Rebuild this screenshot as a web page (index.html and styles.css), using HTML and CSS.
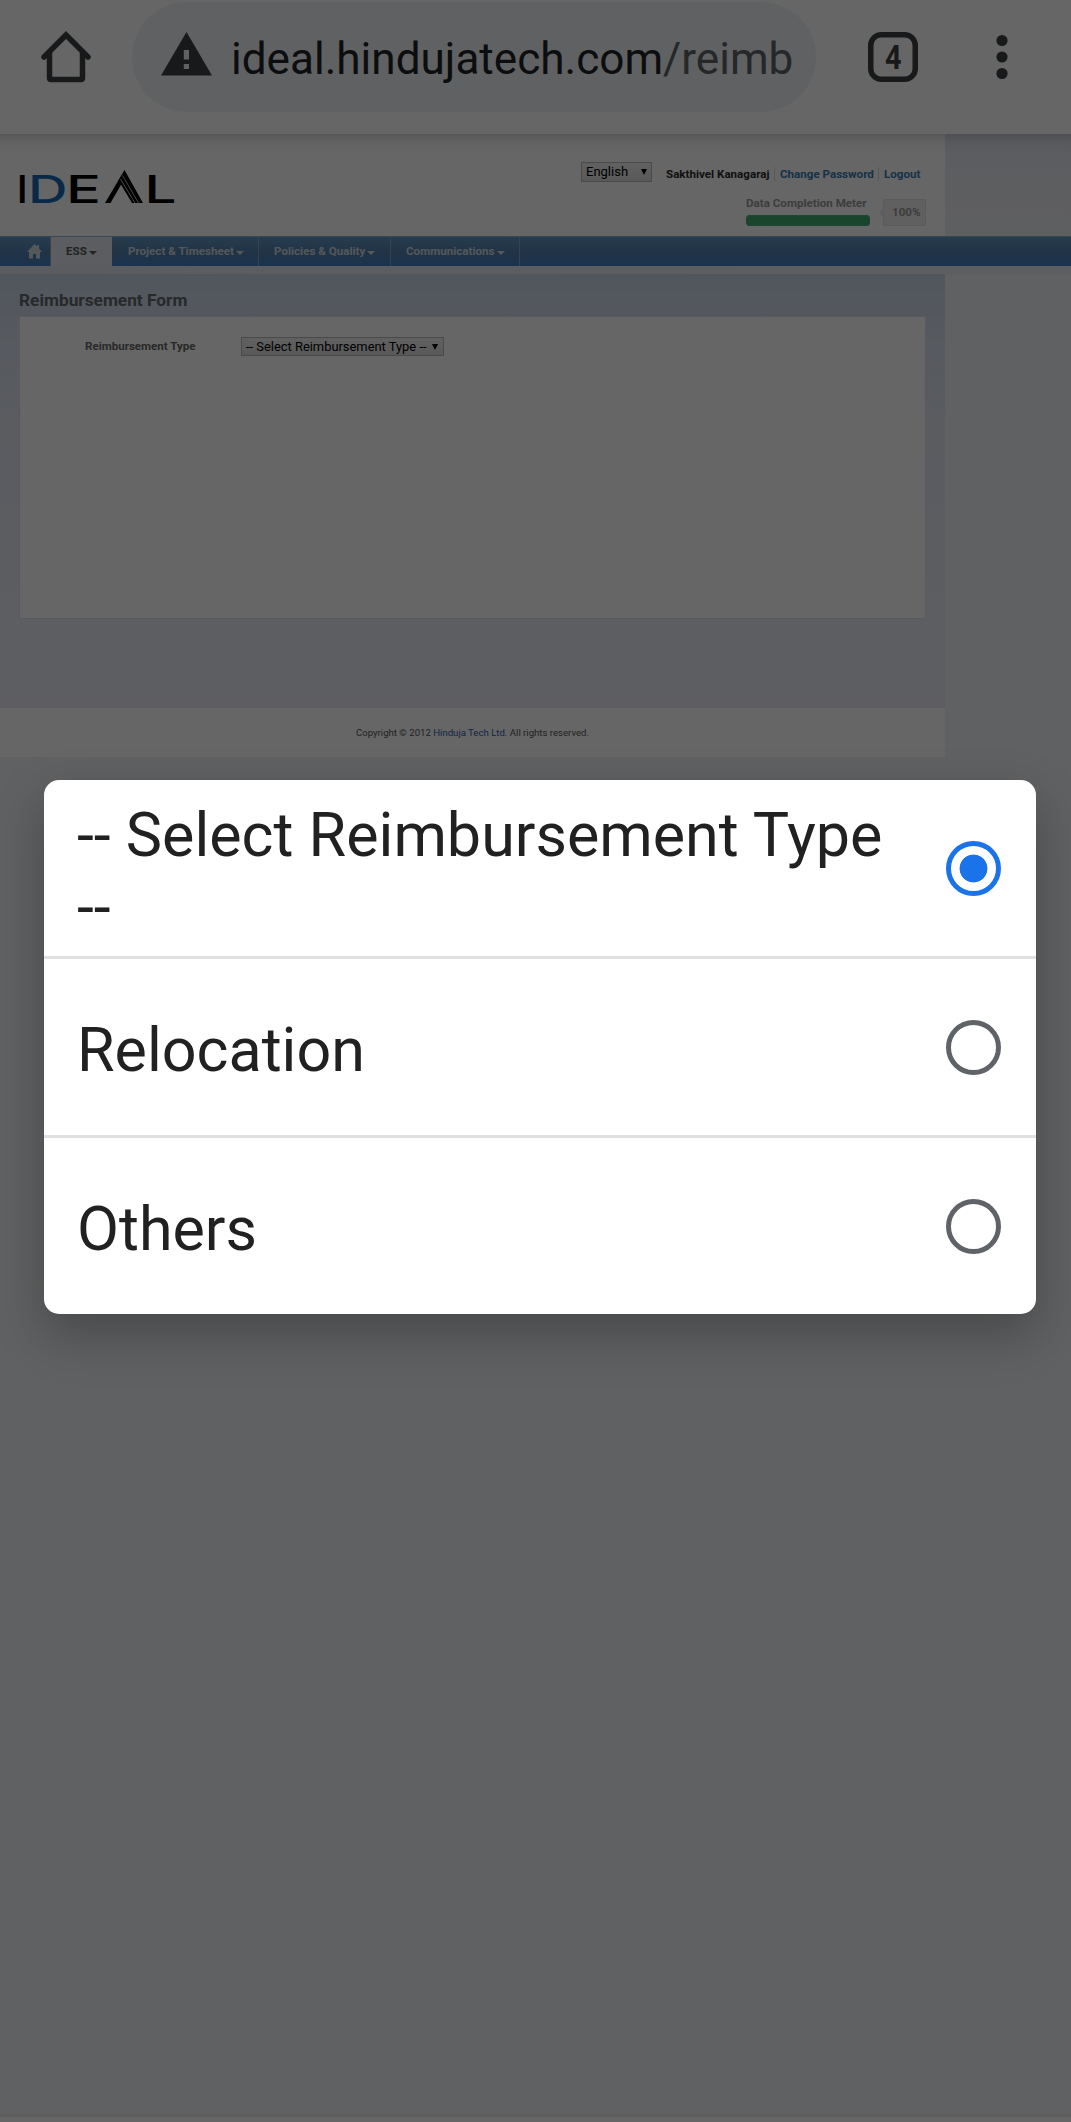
FILE: index.html
```html
<!DOCTYPE html>
<html lang="en">
<head>
<meta charset="utf-8">
<title>Reimbursement Form</title>
<link rel="stylesheet" href="styles.css">
</head>
<body>
<div class="screen">
  <header class="toolbar">
    <svg class="home" width="50" height="52" viewBox="0 0 50 52" fill="none" stroke="#3c4043" stroke-width="5.5" stroke-linecap="round" stroke-linejoin="round"><path d="M3 26 25 4l22 22" stroke-linejoin="miter"/><path d="M8.500 22v25q0 1.500 1.500 1.500h30q1.500 0 1.500-1.500v-25"/></svg>
    <div class="omnibox">
      <svg class="warn" width="51" height="44" viewBox="0 0 51 44"><path fill="#3c4043" fill-rule="evenodd" d="M25.500 0 51 43.500H0zM22.800 18v9.500h5.200v-9.500zM22.800 32v5h5.200v-5z"/></svg>
      <div class="url">ideal.hindujatech.com<span class="path">/reimb</span></div>
    </div>
    <svg class="tabs" width="50" height="50" viewBox="0 0 50 50"><rect x="2.750" y="2.750" width="44.500" height="44.500" rx="10.500" fill="none" stroke="#3c4043" stroke-width="5.500"/><text class="count" x="17" y="37" textLength="16.500" lengthAdjust="spacingAndGlyphs">4</text></svg>
    <svg class="more" width="12" height="46" viewBox="0 0 12 46" fill="#3c4043"><circle cx="6" cy="6.500" r="5.600"/><circle cx="6" cy="23" r="5.600"/><circle cx="6" cy="39.500" r="5.600"/></svg>
  </header>

  <main class="page">
    <div class="top">
      <div class="brand">
        <svg width="170" height="60" viewBox="-6 -10 170 60">
          <g class="logo">
            <text x="-2.500" y="33" textLength="11.500" lengthAdjust="spacingAndGlyphs">I</text>
            <text x="9" y="33" class="blue" textLength="39.500" lengthAdjust="spacingAndGlyphs">D</text>
            <text x="47" y="33" textLength="35" lengthAdjust="spacingAndGlyphs">E</text>
            <text x="125.500" y="33" textLength="32" lengthAdjust="spacingAndGlyphs">L</text>
          </g>
          <path d="M86 33h5.500L105 9.500 118 33h6L105.500 0z"/>
          <path d="M103 5 99.500 10.500 113 33h9z"/>
          <path d="M103.500 5.500 119.500 33M101.500 9l14.500 24" stroke="#fff" stroke-width=".7" fill="none"/>
        </svg>
      </div>
      <div class="account">
        <div class="links">
          <div class="select lang"><span>English</span><i class="arrow"></i></div>
          <span class="user">Sakthivel Kanagaraj</span>
          <a class="change">Change Password</a>
          <a class="logout">Logout</a>
        </div>
        <div class="meter">
          <div><div class="meter-name">Data Completion Meter</div><div class="bar"></div></div>
          <div class="percent">100%</div>
        </div>
      </div>
    </div>

    <nav class="nav">
      <div class="item first"><svg width="15" height="15" viewBox="0 0 15 15" fill="#d5dbe2"><path d="M7.500 0 10 2.500V1h2v3.500L15 8h-2v6.500H9V10H6v4.500H2V8H0z"/></svg></div>
      <div class="item active"><span class="ess">ESS</span><i class="caret"></i></div>
      <div class="item project"><span>Project &amp; Timesheet</span><i class="caret"></i></div>
      <div class="item policies"><span>Policies &amp; Quality</span><i class="caret"></i></div>
      <div class="item comms"><span>Communications</span><i class="caret"></i></div>
    </nav>
    <div class="subnav"></div>

    <section class="content">
      <h1>Reimbursement Form</h1>
      <div class="panel">
        <span class="label">Reimbursement Type</span>
        <div class="select type"><span>-- Select Reimbursement Type --</span><i class="arrow"></i></div>
      </div>
    </section>
    <footer class="footer"><p>Copyright © 2012 <a>Hinduja Tech Ltd.</a> All rights reserved.</p></footer>
  </main>
  <div class="bottom"></div>
</div>

<div class="scrim">
  <div class="dialog">
    <div class="option"><span class="name">-- Select Reimbursement Type --</span><i class="radio on"></i></div>
    <div class="option"><span class="name">Relocation</span><i class="radio"></i></div>
    <div class="option"><span class="name">Others</span><i class="radio"></i></div>
  </div>
</div>
</body>
</html>
```

FILE: styles.css
```css
* { box-sizing: border-box; }
body { margin: 0; font-family: Roboto, sans-serif; background: #f1f3f4; }
svg, i { display: block; flex: none; }
.screen { width: 1071px; height: 2122px; display: flex; flex-direction: column; overflow: hidden; }

/* browser toolbar */
.toolbar { height: 134px; flex: none; display: flex; align-items: flex-start; padding: 2px 0 0 41px; background: #fff; }
.home { margin-top: 29px; }
.omnibox { width: 684px; height: 110px; margin-left: 41px; padding-left: 29px; border-radius: 55px; background: #f1f3f4; display: flex; align-items: flex-start; }
.warn { margin-top: 30px; }
.url { margin: 27px 0 0 19px; font-size: 44.100px; line-height: 60px; color: #202124; white-space: nowrap; }
.path { color: #5f6368; }
.tabs { margin: 30px 0 0 52px; }
.count { font-size: 33px; font-weight: 700; fill: #3c4043; }
.more { margin: 32px 0 0 78px; }

/* site header */
.page { flex: 1; }
.top { height: 102px; display: flex; justify-content: space-between; padding-right: 145px;
  background: linear-gradient(rgba(0,0,0,.14), rgba(0,0,0,.04) 9px, rgba(0,0,0,0) 20px), linear-gradient(90deg, #fff 945px, transparent 945px), linear-gradient(#e5e7f0, #eceef0); }
.brand { padding: 26px 0 0 13px; }
.logo { font-family: Inter, sans-serif; font-size: 38.500px; font-weight: 500; }
.blue { fill: #1a68b4; }
.account { width: 345px; padding-top: 28px; }
.links { display: flex; align-items: flex-start; height: 34px; font-size: 11.600px; font-weight: 700; line-height: 14px; color: #2a2a2a; white-space: nowrap; }
.user, .change, .logout { margin-top: 5px; }
.user { width: 109px; margin-left: 14px; border-right: 1px solid #ddd; }
.change { width: 104px; padding-left: 5px; border-right: 1px solid #ddd; color: #3a7ab5; }
.logout { padding-left: 5px; color: #3a7ab5; }
.select { display: flex; align-items: center; justify-content: space-between; border: 1px solid #b8b8b8; background: linear-gradient(#f2f2f2, #dedede); color: #000; font-weight: 400; white-space: nowrap; }
.arrow { border: 3px solid transparent; border-top: 6.500px solid #000; border-bottom: 0; }
.lang { width: 71px; height: 20px; padding: 0 4px; font-size: 13px; }
.meter { display: flex; gap: 13px; padding-left: 165px; font-size: 11.600px; font-weight: 700; color: #999; line-height: 14px; white-space: nowrap; }
.meter > div:first-child { width: 124px; }
.meter-name { height: 19px; }
.bar { height: 11px; border-radius: 3px; border: 1px solid #58a880; background: #3fad72; }
.percent { width: 43px; height: 27px; margin-top: 3px; padding: 5px 0 0 8px; border: 1px solid #e0e0e0; border-radius: 2px; background: #f0f0f0; position: relative; }
.percent::before { content: ""; position: absolute; left: -5px; top: 9px; border: 4px solid transparent; border-right-color: #e8e8e8; border-left: 0; }

/* navigation */
.nav { height: 30px; display: flex; border-top: 1px solid #8fb2cf; background: linear-gradient(#6199c4, #527fae 55%, #4283c4); font-size: 11.600px; font-weight: 700; color: #d5dbe2; white-space: nowrap; }
.item { height: 29px; display: flex; align-items: center; gap: 2px; border-right: 1px solid #87a7c5; padding: 0 0 1px 16px; }
.first { width: 51px; padding-left: 27px; }
.active { width: 61px; background: #e4e8f0; color: #555; padding-left: 15px; border: 0; }
.project { width: 147px; }
.policies { width: 132px; padding-left: 15px; }
.comms { width: 129px; padding-left: 15px; }
.caret { margin-top: 3px; border: 4px solid transparent; border-top-color: currentColor; border-bottom: 0; }
.subnav { height: 8px; background: linear-gradient(90deg, #e3e7ef, #e8ebf2); }

/* form */
.content { width: 945px; height: 434px; padding: 16px 19px 0; background: linear-gradient(#cbd8e9, #d9e1ee 70px, #e2e6f1 160px, #eaecf4); }
h1 { margin: 0 0 6px; font-size: 17.300px; line-height: 20px; color: #636669; }
.panel { height: 303px; background: #fff; border: 1px solid #dde1ea; display: flex; align-items: flex-start; padding: 20px 0 0 65px; }
.label { width: 156px; margin-top: 2px; font-size: 11.550px; line-height: 14px; font-weight: 700; color: #666; white-space: nowrap; }
.type { width: 203px; height: 19px; padding: 0 5px 0 4px; font-size: 12.900px; }
.footer { width: 945px; height: 49px; background: #fff; padding: 18px 0 0 356px; }
.footer p { margin: 0; font-size: 9.600px; line-height: 14px; color: #555; white-space: nowrap; }
.footer a { color: #2c5cae; }
.bottom { height: 8px; flex: none; border-top: 3px solid #e8e8e8; background: #fff; }

/* select popup */
.scrim { position: absolute; left: 0; top: 0; width: 1071px; height: 2122px; padding: 780px 0 0 44px; background: rgba(0,0,0,.6); overflow: hidden; }
.dialog { width: 991.500px; height: 534px; border-radius: 15px; background: #fff; box-shadow: 0 20px 50px rgba(0,0,0,.26); overflow: hidden; }
.option { height: 179px; display: flex; align-items: center; padding: 0 35px 0 33px; border-bottom: 3px solid #e0e0e0; }
.option:last-child { border: 0; height: 176px; }
.name { width: 830px; padding-top: 6px; font-size: 61px; line-height: 72px; color: #212121; }
.radio { width: 55px; height: 55px; margin-left: auto; border: 5.500px solid #5f6368; border-radius: 50%; }
.on { border-color: #1a73e8; background: radial-gradient(circle, #1a73e8 13.500px, #fff 14.300px); }
```
